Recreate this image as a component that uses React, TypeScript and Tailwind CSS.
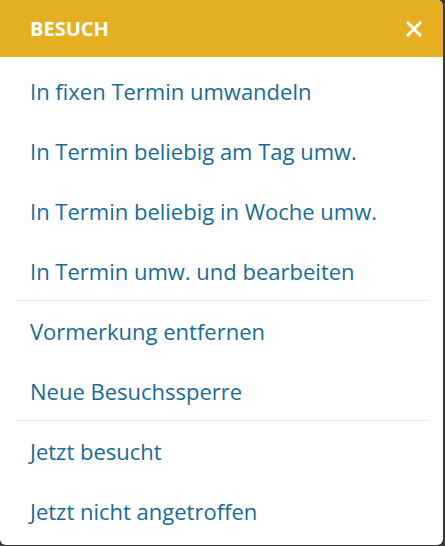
const groups: string[][] = [
  [
    "In fixen Termin umwandeln",
    "In Termin beliebig am Tag umw.",
    "In Termin beliebig in Woche umw.",
    "In Termin umw. und bearbeiten",
  ],
  ["Vormerkung entfernen", "Neue Besuchssperre"],
  ["Jetzt besucht", "Jetzt nicht angetroffen"],
];

export default function App() {
  return (
    <div className="w-[445px] h-[546px] bg-[#3a3a3a] font-['Open_Sans',sans-serif]">
      <div className="w-[443px] h-[545px] bg-white rounded-tr-md rounded-b-md overflow-hidden flex flex-col">
        <div className="h-[57px] bg-[#e5af22] flex items-center justify-between pl-[30px] pr-[21px]">
          <span className="text-white font-bold text-[20px]">BESUCH</span>
          <svg width="16" height="16" viewBox="0 0 16 16" className="text-white">
            <path d="M2 2 L14 14 M14 2 L2 14" stroke="currentColor" strokeWidth="3" strokeLinecap="square" />
          </svg>
        </div>
        <div className="pt-[4px] px-[15px]">
          {groups.map((items, gi) => (
            <div key={gi} className={gi > 0 ? "border-t border-[#e6e6e6] -mt-px" : ""}>
              {items.map((label) => (
                <div key={label} className="h-[60px] flex items-center px-[15px] text-[22px] text-[#186b98]">
                  {label}
                </div>
              ))}
            </div>
          ))}
        </div>
      </div>
    </div>
  );
}
